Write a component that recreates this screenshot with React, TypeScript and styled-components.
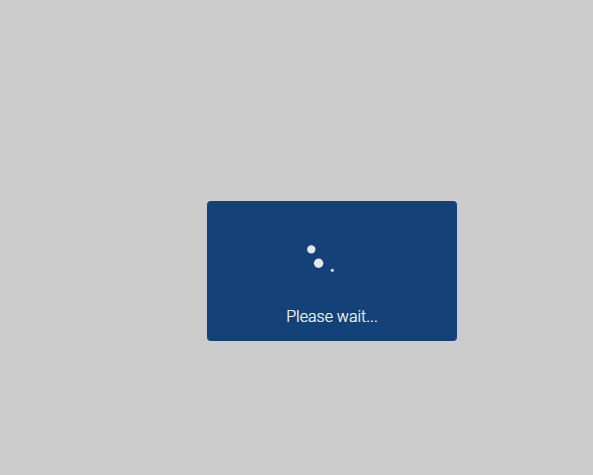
import { createGlobalStyle, styled } from 'styled-components';

const GlobalStyle = createGlobalStyle`
  html, body {
    margin: 0;
    padding: 0;
    background: #cccccc;
  }
`;

const Overlay = styled.div`
  box-sizing: border-box;
  width: 100%;
  height: 100vh;
  padding: 201px 0 0 207px;
  background: #cccccc;
  overflow: hidden;
`;

const Dialog = styled.div`
  box-sizing: border-box;
  width: 250px;
  height: 140px;
  padding-top: 34px;
  display: flex;
  flex-direction: column;
  align-items: center;
  background: #134178;
  border-radius: 4px;
`;

const Spinner = styled.svg`
  display: block;
  width: 60px;
  height: 60px;
`;

const Message = styled.div`
  margin-top: 11px;
  font-family: Roboto, "Liberation Sans", sans-serif;
  font-size: 16px;
  font-weight: 300;
  line-height: 22px;
  color: #ffffff;
  -webkit-text-stroke: 0.2px #ffffff;
`;

export default function App() {
  return (
    <>
      <GlobalStyle />
      <Overlay>
        <Dialog>
          <Spinner viewBox="0 0 60 60" aria-hidden="true">
            <circle cx="9.3" cy="14.4" r="4.2" fill="#e8e8ec" />
            <circle cx="16.6" cy="28.3" r="4.7" fill="#e8e8ec" />
            <circle cx="30.3" cy="35.3" r="1.6" fill="#d4d8e0" />
          </Spinner>
          <Message>Please wait...</Message>
        </Dialog>
      </Overlay>
    </>
  );
}
